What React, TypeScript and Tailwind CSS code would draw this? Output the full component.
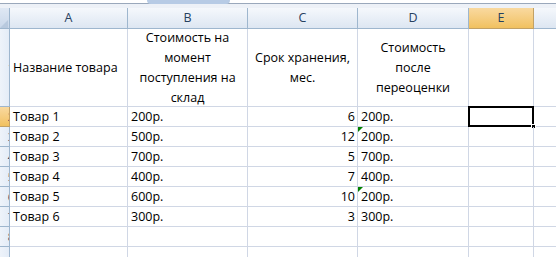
import React from 'react';

const cols = [
  { key: 'A', w: 'w-[118px]' },
  { key: 'B', w: 'w-[120px]' },
  { key: 'C', w: 'w-[110px]' },
  { key: 'D', w: 'w-[111px]' },
  { key: 'E', w: 'w-[65px]' },
];

const rows = [
  { name: 'Товар 1', price: '200р.', term: '6', after: '200р.', flag: false },
  { name: 'Товар 2', price: '500р.', term: '12', after: '200р.', flag: true },
  { name: 'Товар 3', price: '700р.', term: '5', after: '700р.', flag: false },
  { name: 'Товар 4', price: '400р.', term: '7', after: '400р.', flag: false },
  { name: 'Товар 5', price: '600р.', term: '10', after: '200р.', flag: true },
  { name: 'Товар 6', price: '300р.', term: '3', after: '300р.', flag: false },
];

const cell = 'shrink-0 border-r border-b border-[#d0d7e5] overflow-hidden';

const RowHead: React.FC<{ n?: number; active?: boolean; h: string }> = ({ n, active, h }) => (
  <div
    className={`${h} w-[10px] shrink-0 overflow-hidden flex items-center justify-end border-r border-b ${
      active ? 'bg-gradient-to-b from-[#f9d99f] to-[#f1c15f] border-[#c2a165]' : 'bg-gradient-to-r from-[#eef3fa] to-[#e4ecf7] border-[#9eb6ce]'
    }`}
  >
    {n !== undefined && <span className="-mr-[5px] text-[11px] leading-none text-[#27415f]">{n}</span>}
  </div>
);

export default function App() {
  return (
    <div className="w-[556px] h-[257px] overflow-hidden bg-white text-[12.5px] text-black" style={{ fontFamily: '"Open Sans", "Liberation Sans", sans-serif' }}>
      {/* formula bar edge */}
      <div className="h-[8px] flex flex-col">
        <div className="h-[3px] bg-white relative">
          <div className="absolute left-[147px] top-0 w-[83px] h-[4px] rounded-b-[6px] bg-[#b7cbe5]" />
        </div>
        <div className="h-px bg-[#9aa8bb]" />
        <div className="flex-1 bg-[#edf1f7]" />
      </div>

      {/* column headers */}
      <div className="flex h-[21px]">
        <div className="w-[10px] shrink-0 border-r border-b border-[#9eb6ce] bg-gradient-to-b from-[#dfe8f4] to-[#c9d7ea] flex items-end justify-start">
          <div className="w-0 h-0 border-l-[8px] border-l-transparent border-b-[8px] border-b-[#b8c9de]" />
        </div>
        {cols.map(c => (
          <div
            key={c.key}
            className={`${c.w} shrink-0 flex items-center justify-center border-r border-b ${
              c.key === 'E'
                ? 'bg-gradient-to-b from-[#f9d99f] to-[#f1c15f] border-[#c2a165]'
                : 'bg-gradient-to-b from-[#f5f8fc] to-[#dde6f2] border-[#9eb6ce]'
            } text-[#27415f]`}
          >
            {c.key}
          </div>
        ))}
        <div className="flex-1 border-b border-[#9eb6ce] bg-gradient-to-b from-[#f5f8fc] to-[#dde6f2]" />
      </div>

      {/* title row */}
      <div className="flex h-[78px] leading-[20px]">
        <RowHead n={1} h="h-[78px]" />
        <div className={`${cell} w-[118px] flex items-center pl-[3px]`}>Название товара</div>
        <div className={`${cell} w-[120px] flex items-center justify-center text-center`}>
          Стоимость на<br />момент<br />поступления на<br />склад
        </div>
        <div className={`${cell} w-[110px] flex items-center justify-center text-center`}>
          Срок хранения,<br />мес.
        </div>
        <div className={`${cell} w-[111px] flex items-center justify-center text-center`}>
          Стоимость<br />после<br />переоценки
        </div>
        <div className={`${cell} w-[65px]`} />
        <div className="flex-1 border-b border-[#d0d7e5]" />
      </div>

      {/* data rows */}
      {rows.map((r, i) => (
        <div key={r.name} className="flex h-[20px] leading-[19px]">
          <RowHead n={i + 2} active={i === 0} h="h-[20px]" />
          <div className={`${cell} w-[118px] pl-[3px]`}>{r.name}</div>
          <div className={`${cell} w-[120px] pl-[3px]`}>{r.price}</div>
          <div className={`${cell} w-[110px] pr-[2px] text-right`}>{r.term}</div>
          <div className={`${cell} w-[111px] pl-[3px] relative`}>
            {r.flag && (
              <div className="absolute left-0 top-0 w-0 h-0 border-t-[5px] border-t-[#008000] border-r-[5px] border-r-transparent" />
            )}
            {r.after}
          </div>
          <div className={`${cell} w-[65px] relative overflow-visible`}>
            {i === 0 && (
              <>
                <div className="absolute -left-px -top-px w-[66px] h-[21px] border-2 border-black" />
                <div className="absolute -right-[3px] -bottom-[3px] w-[5px] h-[5px] bg-black border border-white" />
              </>
            )}
          </div>
          <div className="flex-1 border-b border-[#d0d7e5]" />
        </div>
      ))}

      {/* empty rows */}
      {[8, 9].map(n => (
        <div key={n} className="flex h-[20px]">
          <RowHead n={n === 8 ? n : undefined} h="h-[20px]" />
          {cols.map(c => (
            <div key={c.key} className={`${cell} ${c.w}`} />
          ))}
          <div className="flex-1 border-b border-[#d0d7e5]" />
        </div>
      ))}
    </div>
  );
}
